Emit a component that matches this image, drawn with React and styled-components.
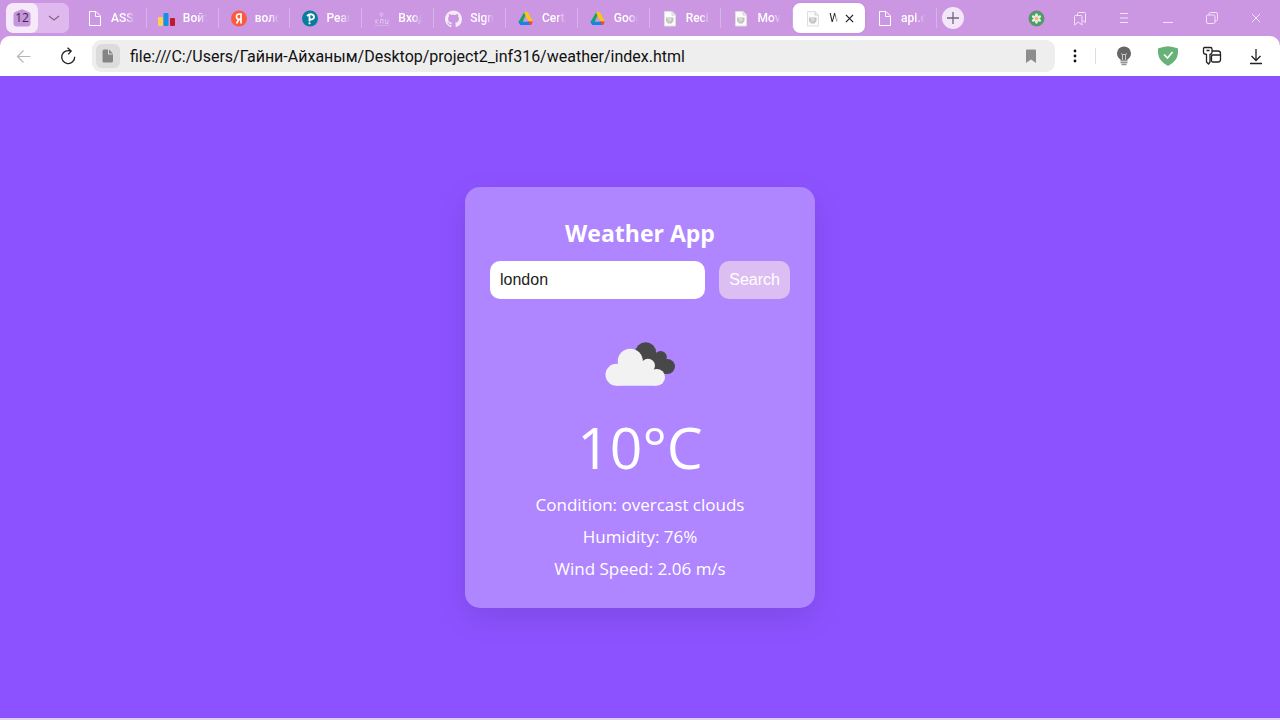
import React, { useState } from "react";
import styled, { createGlobalStyle, css } from "styled-components";

const GlobalStyle = createGlobalStyle`
  *, *::before, *::after { box-sizing: border-box; }
  body { margin: 0; font-family: "Open Sans", "Noto Sans", sans-serif; }
  button, input { font: inherit; margin: 0; }
  h1, p { margin: 0; }
  svg { display: block; flex: none; }
`;

const Window = styled.div`
  min-height: 100vh;
  display: flex;
  flex-direction: column;
  background: #cb97e2;
`;

const PlainButton = styled.button.attrs({ type: "button" })`
  display: flex;
  align-items: center;
  justify-content: center;
  border: 0;
  padding: 0;
  background: transparent;
  color: inherit;
`;

/* Tab strip */
const TabStrip = styled.header`
  display: flex;
  align-items: center;
  height: 36px;
  padding-left: 6px;
  color: #fff;
`;

const TabGroup = styled.div`
  display: flex;
  flex: none;
  width: 63px;
  height: 30px;
  margin-right: 6px;
  border-radius: 7px;
  background: #dfb9ee;
  overflow: hidden;
`;

const GroupCount = styled(PlainButton)`
  width: 32px;
  border-radius: 7px;
  background: #f5e9fa;
`;

const CountBadge = styled.span`
  display: grid;
  place-items: center;
  width: 18px;
  height: 18px;
  color: #3b2845;
  font-size: 12px;
  line-height: 18px;

  > * { grid-area: 1 / 1; }
`;

const GroupToggle = styled(PlainButton)`
  flex: 1;
  color: #80688b;
`;

const Tabs = styled.nav`
  display: flex;
  flex: 0 1 862px;
  min-width: 0;
`;

const TabItem = styled.div`
  display: flex;
  align-items: center;
  flex: 1 1 0;
  min-width: 0;
  height: 30px;
  ${(p) =>
    p.$active
      ? css`
          border-radius: 7px;
          background: #fff;
          color: #222;
          box-shadow: 0 0 2px #b27fcb;
        `
      : css`
          background: linear-gradient(#dab2eb, #dab2eb) right center / 1px 20px no-repeat;
        `}
`;

const TabButton = styled(PlainButton)`
  flex: 1;
  min-width: 0;
  height: 30px;
  gap: 8px;
  padding: 0 0 0 11px;
  justify-content: flex-start;
`;

const TabTitle = styled.span`
  width: ${(p) => (p.$active ? "9px" : "24px")};
  overflow: hidden;
  white-space: nowrap;
  text-align: left;
  font-family: Roboto, "Noto Sans", sans-serif;
  font-size: 12px;
  font-weight: ${(p) => (p.$active ? 400 : 500)};
  line-height: 16px;
  mask-image: linear-gradient(90deg, #000 60%, transparent);
`;

const CloseTab = styled(PlainButton)`
  flex: none;
  width: 18px;
  height: 18px;
  margin-right: 7px;
`;

const NewTab = styled(PlainButton)`
  flex: none;
  width: 22px;
  height: 22px;
  margin-left: 5px;
  border-radius: 50%;
  background: #f3e6f9;
  color: #75657d;
`;

const WindowControls = styled.div`
  display: flex;
  margin-left: auto;
  padding-right: 2px;
`;

const WindowButton = styled(PlainButton)`
  width: 44px;
  height: 36px;
  color: #f3e2fa;
`;

/* Address bar */
const Toolbar = styled.div`
  display: flex;
  align-items: center;
  height: 40px;
  padding: 0 2px;
  border-radius: 10px 10px 0 0;
  background: #fff;
  color: #222;
`;

const ToolButton = styled(PlainButton)`
  flex: none;
  width: 44px;
  height: 40px;
`;

const Address = styled.form`
  display: flex;
  align-items: center;
  flex: 1;
  min-width: 0;
  height: 32px;
  margin-left: 2px;
  padding: 0 14px 0 4px;
  border-radius: 9px;
  background: #eee;
`;

const SiteInfo = styled(PlainButton)`
  flex: none;
  width: 24px;
  height: 24px;
  margin-right: 10px;
  border-radius: 6px;
  background: #dcdcdc;
`;

const AddressInput = styled.input`
  flex: 1;
  min-width: 0;
  height: 32px;
  border: 0;
  padding: 0;
  outline: 0;
  background: transparent;
  color: #111;
  font-family: Roboto, "Noto Sans", sans-serif;
  font-size: 16px;
`;

const BookmarkButton = styled(PlainButton)`
  width: 20px;
  height: 24px;
`;

const MenuButton = styled(PlainButton)`
  flex: none;
  width: 40px;
  height: 40px;
  color: #111;
`;

const Divider = styled.span`
  width: 1px;
  height: 16px;
  margin-right: 6px;
  background: #ddd;
`;

/* Weather page */
const Page = styled.main`
  display: flex;
  flex: 1;
  align-items: center;
  justify-content: center;
  background: #8c52ff;
  border-bottom: 2px solid #ddd0f0;
`;

const Card = styled.section`
  display: flex;
  flex-direction: column;
  align-items: center;
  width: 100%;
  max-width: 350px;
  padding: 28px 25px 23px;
  border-radius: 15px;
  background: #af86ff;
  box-shadow: 0 10px 30px rgba(0, 0, 0, 0.1);
  color: #fff;
  text-align: center;
`;

const Title = styled.h1`
  font-size: 23px;
  font-weight: 700;
  line-height: 36px;
`;

const SearchForm = styled.form`
  display: flex;
  gap: 14px;
  width: 100%;
  margin-top: 10px;
  font-family: "Liberation Sans", Arial, sans-serif;
  font-size: 16px;
`;

const CityInput = styled.input`
  flex: 1;
  min-width: 0;
  height: 38px;
  padding: 0 10px;
  border: 0;
  border-radius: 10px;
  outline: 0;
  background: #fff;
  color: #222;
`;

const SearchButton = styled.button`
  height: 38px;
  padding: 0 10px;
  border: 0;
  border-radius: 10px;
  background: #dcbef2;
  color: #fff;
`;

const WeatherIcon = styled.svg`
  width: 100px;
  height: 100px;
  margin-top: 16px;
`;

const Temperature = styled.p`
  margin-bottom: 10px;
  font-size: 57px;
  line-height: 64px;
`;

const Detail = styled.p`
  font-size: 17px;
  line-height: 32px;
`;

const stroke = { fill: "none", stroke: "currentColor" };

const FileIcon = () => (
  <svg width="17" height="18" viewBox="0 0 17 18" {...stroke}>
    <path d="M3.500 2.500H10l4.500 4.500v9.500h-11zM9.500 2.500v5h5" />
  </svg>
);

const ChartIcon = () => (
  <svg width="17" height="18" viewBox="0 0 17 18">
    <rect x="0" y="8" width="5" height="9" rx="1" fill="#ffcf4e" />
    <rect x="5.500" y="4" width="5" height="13" rx="1" fill="#1690e0" />
    <rect x="12" y="9" width="5" height="8" rx="1" fill="#c2182c" />
  </svg>
);

const YandexIcon = () => (
  <svg width="17" height="18" viewBox="0 0 17 18">
    <circle cx="9" cy="9.500" r="8" fill="#fc5a3c" />
    <path d="M11 14.500V5H9.200Q6.500 5 6.500 7.700T9.200 10.300H11M9 10.300 6.500 14.500" fill="none" stroke="#fff" strokeWidth="1.700" />
  </svg>
);

const PearsonIcon = () => (
  <svg width="17" height="18" viewBox="0 0 17 18">
    <circle cx="9" cy="9.500" r="8" fill="#087d9c" />
    <path d="M6 7Q8 5 10.500 5.300 13.200 5.800 13 8.300 12.600 10.600 8.800 10.600M8.500 6.500v6" fill="none" stroke="#fff" strokeWidth="1.800" />
    <circle cx="8.500" cy="14.300" r="1.100" fill="#fff" />
  </svg>
);

const CrestIcon = () => (
  <svg width="17" height="18" viewBox="0 0 17 18" {...stroke} stroke="#e2c4ef" strokeWidth="1">
    <path d="M6.500 4.500 8.500 7l2-2.500M7.500 4h2M8.500 7v1M3 10.500v4m0-2 2-2m-2 2 2 2M7.500 14.500v-4h2.500v4M12.500 10.500v4h2.500v-4" />
    <path d="M2 16.500h14" opacity=".5" />
  </svg>
);

const GithubIcon = () => (
  <svg width="17" height="18" viewBox="0 -1.500 16 17">
    <path
      fill="#f4ecf7"
      d="M8 0C3.580 0 0 3.580 0 8c0 3.540 2.290 6.530 5.470 7.590.4.070.55-.17.55-.38 0-.19-.01-.82-.01-1.490-2.010.37-2.530-.49-2.690-.94-.09-.23-.48-.94-.82-1.130-.28-.15-.68-.52-.01-.53.63-.01 1.080.58 1.230.82.72 1.210 1.870.87 2.330.66.07-.52.28-.87.51-1.070-1.780-.2-3.640-.89-3.640-3.950 0-.87.31-1.590.82-2.150-.08-.2-.36-1.020.08-2.120 0 0 .67-.21 2.200.82.64-.18 1.320-.27 2-.27s1.360.09 2 .27c1.530-1.040 2.200-.82 2.200-.82.44 1.100.16 1.920.08 2.120.51.56.82 1.270.82 2.150 0 3.070-1.870 3.750-3.650 3.950.29.25.54.73.54 1.480 0 1.070-.01 1.930-.01 2.200 0 .21.15.46.55.38A8.010 8.010 0 0 0 16 8c0-4.420-3.580-8-8-8z"
    />
  </svg>
);

const DriveIcon = () => (
  <svg width="17" height="18" viewBox="0 0 17 18">
    <path fill="#14a75a" d="M7 3.500h3L5.500 13 3.500 16 1.500 13z" />
    <path fill="#ffc313" d="M7 3.500Q7.500 3 8 3h2q.7 0 1 .5l5 9h-4.500z" />
    <path fill="#1683e9" d="M1.500 12.500H12L13.500 16H4q-.7 0-1-.5z" />
    <path fill="#ed4937" d="M11 12.500h5l-1.500 3q-.3.500-1 .5z" />
    <path fill="#cb97e2" d="m8.700 8.500 2.200 4H6.500z" />
  </svg>
);

const AngularFileIcon = () => (
  <svg width="17" height="18" viewBox="0 0 17 18">
    <path d="M3.500 2.500h7.500L14.500 6v11h-11z" fill="#fbfbfb" stroke="#dedede" />
    <path d="M11 2.500V6h3.500" fill="#eee" stroke="#d2d2d2" />
    <path d="M5 8.500h7.500V12l-2 2.500H7L5 12z" fill="#c2c2c2" />
    <path d="M6.500 10h3.500M7.500 12.500l3-2" fill="none" stroke="#eee" />
  </svg>
);

const CloseIcon = ({ size = 10, width = 1 }) => (
  <svg width={size} height={size} viewBox="0 0 10 10" {...stroke} strokeWidth={width}>
    <path d="m1 1 8 8M9 1 1 9" />
  </svg>
);

const FlowerIcon = () => (
  <svg width="17" height="17" viewBox="0 0 17 17">
    <circle cx="8.500" cy="8.500" r="7.500" fill="#3ea75d" stroke="#777f79" />
    <g fill="#f6e9ee">
      {[0, 60, 120, 180, 240, 300].map((a) => (
        <ellipse key={a} cx="8.500" cy="5.500" rx="1.400" ry="2.200" transform={`rotate(${a} 8.500 8.500)`} />
      ))}
    </g>
    <circle cx="8.500" cy="8.500" r="1.600" fill="#f2b75b" />
  </svg>
);

const BookmarksIcon = () => (
  <svg width="14" height="15" viewBox="0 0 14 15" {...stroke}>
    <path d="M1.500 5.500q0-1 1-1h5.500q1 0 1 1v8.500l-3.800-3L1.500 14zM4.500 4.500v-2q0-1 1-1h6q1 0 1 1v9L9.500 9.500" />
  </svg>
);

const MenuLinesIcon = () => (
  <svg width="10" height="12" viewBox="0 0 10 12" {...stroke}>
    <path d="M1 1.500h8M1 6h8M1 10.500h8" />
  </svg>
);

const MinimizeIcon = () => (
  <svg width="12" height="12" viewBox="0 0 12 12" {...stroke}>
    <path d="M1 10.500h10" />
  </svg>
);

const RestoreIcon = () => (
  <svg width="12" height="12" viewBox="0 0 12 12" {...stroke}>
    <rect x=".5" y="3" width="8.500" height="8.500" rx="1.500" />
    <path d="M3 3V1.500Q3 .5 4.500 .5h5.500q1.500 0 1.500 1.500v5.500Q11.500 9 9 9" />
  </svg>
);

const BackIcon = () => (
  <svg width="16" height="14" viewBox="0 0 16 14" {...stroke} stroke="#b7b7b7" strokeWidth="1.200">
    <path d="M14.500 7.500H2M7.500 1.500 1.500 7.500l6 6" />
  </svg>
);

const ReloadIcon = () => (
  <svg width="16" height="18" viewBox="0 0 16 18" {...stroke} strokeWidth="1.300">
    <path d="M14.700 9.800A6.500 6.500 0 1 1 11 4.200M7.500 .8 11.200 4.100 8.200 7.400" />
  </svg>
);

const PageIcon = () => (
  <svg width="12" height="14" viewBox="0 0 12 14" fill="#858585">
    <path d="M2 .5h4v5h5V12q0 1.500-1.500 1.500H2Q.5 13.500.5 12V2Q.5.500 2 .5M7 .5 11 4.500H7z" />
  </svg>
);

const BookmarkIcon = () => (
  <svg width="12" height="15" viewBox="0 0 12 15" fill="#8d8d8d">
    <path d="M1 1.500Q1 .5 2 .5h8q1 0 1 1V14l-5-3.500L1 14z" />
  </svg>
);

const DotsIcon = () => (
  <svg width="4" height="14" viewBox="0 0 4 14" fill="currentColor">
    <circle cx="2" cy="2" r="1.400" />
    <circle cx="2" cy="7" r="1.400" />
    <circle cx="2" cy="12" r="1.400" />
  </svg>
);

const BulbIcon = () => (
  <svg width="16" height="20" viewBox="0 0 16 20">
    <path d="M5 14 2.700 12A7 7 0 1 1 13.300 12L11 14z" fill="#666" />
    <path d="M6.500 14V8.500L5 7.500M9.500 14V8.500L11 7.500M6.500 8.500h3" fill="none" stroke="#ccc" />
    <path d="M4.500 14.500h7M4.500 16.500h7M5.500 18.500h5" stroke="#929292" strokeWidth="1.300" />
  </svg>
);

const ShieldIcon = () => (
  <svg width="22" height="22" viewBox="0 0 22 22">
    <path d="M1 3.500Q6 1.500 11 1.200 16 1.500 21 3.500V8Q20.500 16 11 21 1.500 16 1 8z" fill="#67b279" />
    <path d="m7 9.500 3.500 3.500L15.500 7" fill="none" stroke="#fff" strokeWidth="1.700" />
  </svg>
);

const KeyCardIcon = () => (
  <svg width="20" height="20" viewBox="0 0 20 20" {...stroke} strokeWidth="1.300" strokeLinejoin="round">
    <path d="M2.500 1.500h6q1.500 0 1.500 1.500v3.500q0 1.500-2 2v7.500L6.500 18 4.500 16V8.500q-3-.5-3-2V3q0-1.500 1-1.500M4.500 4.500h3M10.500 5h5.500q2.500 0 2.500 2.500v6Q18.500 16 16 16h-5.500q-1 0-1-1.500V10.500q0-1.500 1.500-1.500h7.500" />
  </svg>
);

const DownloadIcon = () => (
  <svg width="14" height="18" viewBox="0 0 14 18" {...stroke} strokeWidth="1.300">
    <path d="M7 2v11M2.500 9 7 13.500 11.500 9M1 16.500h12" />
  </svg>
);

const tabs = [
  { title: "ASSIGN", icon: <FileIcon /> },
  { title: "Войти", icon: <ChartIcon /> },
  { title: "волонтер", icon: <YandexIcon /> },
  { title: "Pearson", icon: <PearsonIcon /> },
  { title: "Вход", icon: <CrestIcon /> },
  { title: "Sign in", icon: <GithubIcon /> },
  { title: "Certificates", icon: <DriveIcon /> },
  { title: "Google", icon: <DriveIcon /> },
  { title: "Recipe", icon: <AngularFileIcon /> },
  { title: "Movie", icon: <AngularFileIcon /> },
  { title: "Weather", icon: <AngularFileIcon />, active: true },
  { title: "api.openweather", icon: <FileIcon /> },
];

function Tab({ title, icon, active }) {
  return (
    <TabItem $active={active}>
      <TabButton aria-current={active ? "page" : undefined}>
        {icon}
        <TabTitle $active={active}>{title}</TabTitle>
      </TabButton>
      {active && (
        <CloseTab aria-label="Close tab">
          <CloseIcon size={9} width={1.4} />
        </CloseTab>
      )}
    </TabItem>
  );
}

export default function App() {
  const [city, setCity] = useState("london");
  const [url, setUrl] = useState(
    "file:///C:/Users/Гайни-Айханым/Desktop/project2_inf316/weather/index.html"
  );

  return (
    <Window>
      <GlobalStyle />
      <TabStrip>
        <TabGroup>
          <GroupCount aria-label="12 tabs">
            <CountBadge>
              <svg width="18" height="18" viewBox="0 0 18 18">
                <path d="M7.500 .7Q9 0 10.500.7L16 3q1.500.7 1.500 2.500v9q0 3-3 3h-11q-3 0-3-3v-9Q.5 3.700 2 3z" fill="#c795dc" />
              </svg>
              <span>12</span>
            </CountBadge>
          </GroupCount>
          <GroupToggle aria-label="Show tab groups">
            <svg width="12" height="7" viewBox="0 0 12 7" {...stroke} strokeWidth="1.300">
              <path d="m1 1 5 4 5-4" />
            </svg>
          </GroupToggle>
        </TabGroup>
        <Tabs aria-label="Open tabs">
          {tabs.map((tab) => (
            <Tab key={tab.title} {...tab} />
          ))}
        </Tabs>
        <NewTab aria-label="New tab">
          <svg width="12" height="12" viewBox="0 0 12 12" {...stroke} strokeWidth="1.300">
            <path d="M6 0v12M0 6h12" />
          </svg>
        </NewTab>
        <WindowControls>
          <WindowButton aria-label="Extension"><FlowerIcon /></WindowButton>
          <WindowButton aria-label="Bookmarks"><BookmarksIcon /></WindowButton>
          <WindowButton aria-label="Menu"><MenuLinesIcon /></WindowButton>
          <WindowButton aria-label="Minimize"><MinimizeIcon /></WindowButton>
          <WindowButton aria-label="Restore"><RestoreIcon /></WindowButton>
          <WindowButton aria-label="Close"><CloseIcon /></WindowButton>
        </WindowControls>
      </TabStrip>

      <Toolbar>
        <ToolButton aria-label="Back"><BackIcon /></ToolButton>
        <ToolButton aria-label="Reload"><ReloadIcon /></ToolButton>
        <Address onSubmit={(e) => e.preventDefault()}>
          <SiteInfo aria-label="Site information"><PageIcon /></SiteInfo>
          <AddressInput
            aria-label="Address"
            spellCheck={false}
            value={url}
            onChange={(e) => setUrl(e.target.value)}
          />
          <BookmarkButton aria-label="Bookmark this page"><BookmarkIcon /></BookmarkButton>
        </Address>
        <MenuButton aria-label="More"><DotsIcon /></MenuButton>
        <Divider />
        <ToolButton aria-label="Theme"><BulbIcon /></ToolButton>
        <ToolButton aria-label="Ad blocker"><ShieldIcon /></ToolButton>
        <ToolButton aria-label="Passwords and cards"><KeyCardIcon /></ToolButton>
        <ToolButton aria-label="Downloads"><DownloadIcon /></ToolButton>
      </Toolbar>

      <Page>
        <Card>
          <Title>Weather App</Title>
          <SearchForm onSubmit={(e) => e.preventDefault()}>
            <CityInput
              aria-label="City"
              spellCheck={false}
              value={city}
              onChange={(e) => setCity(e.target.value)}
            />
            <SearchButton type="submit">Search</SearchButton>
          </SearchForm>
          <WeatherIcon viewBox="0 0 100 100" role="img" aria-label="Overcast clouds">
            <g fill="#484848">
              <circle cx="55.700" cy="37.700" r="10.400" />
              <circle cx="70.600" cy="42.200" r="6.200" />
              <circle cx="77.400" cy="51.500" r="7.600" />
              <path d="M55 38h14l8 10v11H62z" />
            </g>
            <g fill="#f2f2f2">
              <circle cx="40.300" cy="46.200" r="12.500" />
              <circle cx="26.500" cy="59.700" r="11" />
              <circle cx="58" cy="50.700" r="7" />
              <circle cx="66.600" cy="62.300" r="8.400" />
              <path d="M26.500 55 40 46h14l10 9 2.600 15.700H26.500z" />
            </g>
          </WeatherIcon>
          <Temperature>10°C</Temperature>
          <Detail>Condition: overcast clouds</Detail>
          <Detail>Humidity: 76%</Detail>
          <Detail>Wind Speed: 2.06 m/s</Detail>
        </Card>
      </Page>
    </Window>
  );
}
